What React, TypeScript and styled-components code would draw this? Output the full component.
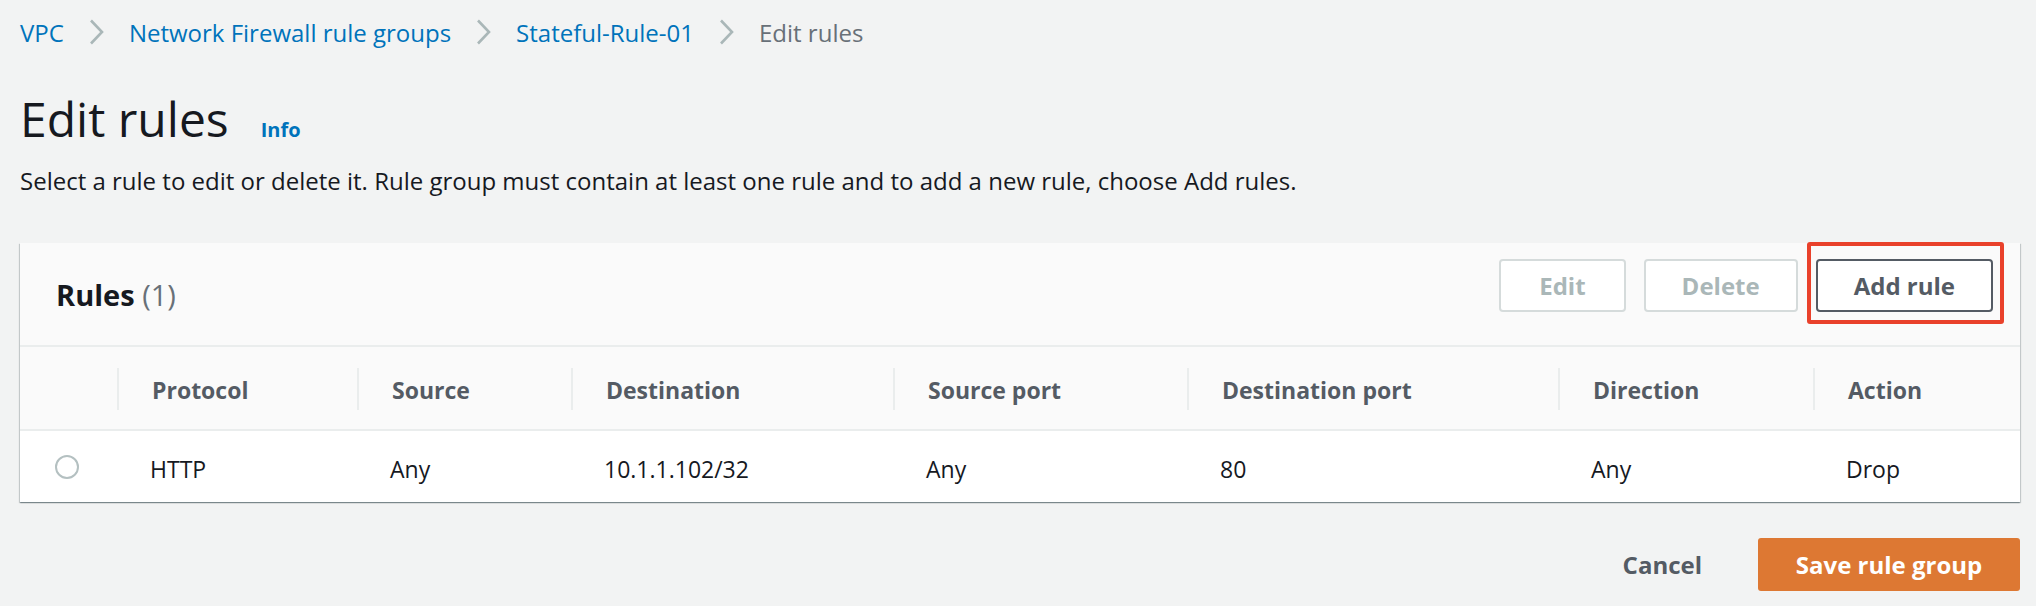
import styled, { createGlobalStyle } from 'styled-components';

const GlobalStyle = createGlobalStyle`
  html, body {
    margin: 0;
    padding: 0;
    background: #f2f3f3;
  }
  body {
    font-family: "Open Sans", "Liberation Sans", Arial, sans-serif;
    color: #16191f;
  }
`;

const columns = [
  { key: 'protocol', label: 'Protocol', width: 240 },
  { key: 'source', label: 'Source', width: 214 },
  { key: 'destination', label: 'Destination', width: 322 },
  { key: 'sourcePort', label: 'Source port', width: 294 },
  { key: 'destinationPort', label: 'Destination port', width: 371 },
  { key: 'direction', label: 'Direction', width: 255 },
  { key: 'action', label: 'Action', width: 0 },
];

const rules = [
  {
    id: 'r1',
    protocol: 'HTTP',
    source: 'Any',
    destination: '10.1.1.102/32',
    sourcePort: 'Any',
    destinationPort: '80',
    direction: 'Any',
    action: 'Drop',
  },
];

const gridTemplate = `97px ${columns
  .map((c) => (c.width ? `${c.width}px` : '1fr'))
  .join(' ')}`;

const Chevron = () => (
  <svg width="15" height="26" viewBox="0 0 15 26" fill="none">
    <path d="M2 1.5l11 11.5-11 11.5" stroke="#aab7b8" strokeWidth="2.6" />
  </svg>
);

const App = () => {
  return (
    <>
      <GlobalStyle />
      <Page>
        <Breadcrumbs>
          <Crumb href="#">VPC</Crumb>
          <Chevron />
          <Crumb href="#">Network Firewall rule groups</Crumb>
          <Chevron />
          <Crumb href="#">Stateful-Rule-01</Crumb>
          <Chevron />
          <Current>Edit rules</Current>
        </Breadcrumbs>

        <TitleRow>
          <Title>Edit rules</Title>
          <InfoLink href="#">Info</InfoLink>
        </TitleRow>
        <Description>
          Select a rule to edit or delete it. Rule group must contain at least one rule and to add
          a new rule, choose Add rules.
        </Description>

        <Container>
          <ContainerHeader>
            <HeaderTitle>
              Rules <Counter>(1)</Counter>
            </HeaderTitle>
            <Actions>
              <Button disabled $wide>
                Edit
              </Button>
              <Button disabled>Delete</Button>
              <Highlighted>
                <Button>Add rule</Button>
              </Highlighted>
            </Actions>
          </ContainerHeader>

          <Table>
            <HeadRow>
              <HeadCell $first />
              {columns.map((c) => (
                <HeadCell key={c.key}>{c.label}</HeadCell>
              ))}
            </HeadRow>
            {rules.map((r) => (
              <BodyRow key={r.id}>
                <RadioCell>
                  <Radio />
                </RadioCell>
                {columns.map((c) => (
                  <BodyCell key={c.key}>{r[c.key as keyof typeof r]}</BodyCell>
                ))}
              </BodyRow>
            ))}
          </Table>
        </Container>

        <Footer>
          <LinkButton>Cancel</LinkButton>
          <PrimaryButton>Save rule group</PrimaryButton>
        </Footer>
      </Page>
    </>
  );
};

export default App;

// region STYLES

const Page = styled.div`
  padding: 0 16px 0 20px;
  width: 2036px;
  height: 606px;
  box-sizing: border-box;
  overflow: hidden;
`;

const Breadcrumbs = styled.nav`
  height: 62px;
  padding-top: 2px;
  box-sizing: border-box;
  display: flex;
  align-items: center;
  gap: 25px;
  font-size: 24px;
`;

const Crumb = styled.a`
  color: #0073bb;
  text-decoration: none;
`;

const Current = styled.span`
  color: #687078;
`;

const TitleRow = styled.div`
  display: flex;
  align-items: baseline;
  margin-top: 28px;
  height: 58px;
`;

const Title = styled.h1`
  margin: 0;
  font-size: 48px;
  font-weight: 400;
  line-height: 58px;
  color: #16191f;
`;

const InfoLink = styled.a`
  margin-left: 32px;
  font-size: 20px;
  font-weight: 700;
  color: #0073bb;
  text-decoration: none;
`;

const Description = styled.p`
  margin: 18px 0 0;
  font-size: 24px;
  line-height: 30px;
  color: #16191f;
`;

const Container = styled.section`
  margin-top: 47px;
  background: #ffffff;
  box-shadow: 0 1px 1px 0 rgba(0, 28, 36, 0.3), 1px 1px 1px 0 rgba(0, 28, 36, 0.15),
    -1px 1px 1px 0 rgba(0, 28, 36, 0.15);
`;

const ContainerHeader = styled.div`
  height: 104px;
  box-sizing: border-box;
  display: flex;
  align-items: center;
  justify-content: space-between;
  padding: 0 27px 0 36px;
  background: #fafafa;
  border-bottom: 2px solid #eaeded;
`;

const HeaderTitle = styled.h2`
  margin: 0;
  font-size: 29px;
  font-weight: 700;
  color: #16191f;
`;

const Counter = styled.span`
  font-weight: 400;
  color: #687078;
`;

const Actions = styled.div`
  display: flex;
  gap: 18px;
  align-self: flex-start;
  margin-top: 16px;
`;

const Button = styled.button<{ $wide?: boolean }>`
  height: 53px;
  padding: 0 ${(p) => (p.$wide ? 38 : 36)}px;
  border-radius: 4px;
  border: 2px solid #545b64;
  background: #ffffff;
  color: #545b64;
  font-family: "Open Sans", "Liberation Sans", Arial, sans-serif;
  font-size: 24px;
  font-weight: 700;
  cursor: pointer;

  &:disabled {
    border-color: #d5dbdb;
    color: #aab7b8;
    cursor: default;
  }
`;

const Highlighted = styled.div`
  position: relative;

  &::after {
    content: '';
    position: absolute;
    top: -17px;
    left: -9px;
    right: -11px;
    bottom: -12px;
    border: 4px solid #e9412b;
    border-radius: 3px;
    pointer-events: none;
  }
`;

const Table = styled.div`
  display: grid;
  grid-template-columns: ${gridTemplate};
`;

const HeadRow = styled.div`
  display: contents;
`;

const HeadCell = styled.div<{ $first?: boolean }>`
  height: 84px;
  box-sizing: border-box;
  display: flex;
  align-items: center;
  padding: 4px 0 0 35px;
  background: #fafafa;
  border-bottom: 2px solid #eaeded;
  font-size: 23px;
  font-weight: 700;
  color: #545b64;
  position: relative;

  &::before {
    content: '';
    display: ${(p) => (p.$first ? 'none' : 'block')};
    position: absolute;
    left: 0;
    top: 21px;
    height: 42px;
    width: 2px;
    background: #eaeded;
  }
`;

const BodyRow = styled.div`
  display: contents;
`;

const RadioCell = styled.div`
  height: 71px;
  display: flex;
  align-items: center;
  padding-left: 35px;
`;

const Radio = styled.span`
  width: 20px;
  height: 20px;
  border: 2px solid #b4c0c1;
  border-radius: 50%;
  background: #ffffff;
`;

const BodyCell = styled.div`
  height: 71px;
  box-sizing: border-box;
  display: flex;
  align-items: center;
  padding: 5px 0 0 33px;
  font-size: 23px;
  color: #16191f;
`;

const Footer = styled.div`
  display: flex;
  justify-content: flex-end;
  align-items: center;
  gap: 23px;
  margin-top: 36px;
`;

const LinkButton = styled.button`
  height: 53px;
  padding: 0 33px;
  border: none;
  background: transparent;
  color: #545b64;
  font-family: "Open Sans", "Liberation Sans", Arial, sans-serif;
  font-size: 24px;
  font-weight: 700;
  cursor: pointer;
`;

const PrimaryButton = styled.button`
  height: 53px;
  width: 262px;
  border: none;
  border-radius: 3px;
  background: #dd7833;
  color: #ffffff;
  font-family: "Open Sans", "Liberation Sans", Arial, sans-serif;
  font-size: 24px;
  font-weight: 700;
  cursor: pointer;
`;

// endregion
